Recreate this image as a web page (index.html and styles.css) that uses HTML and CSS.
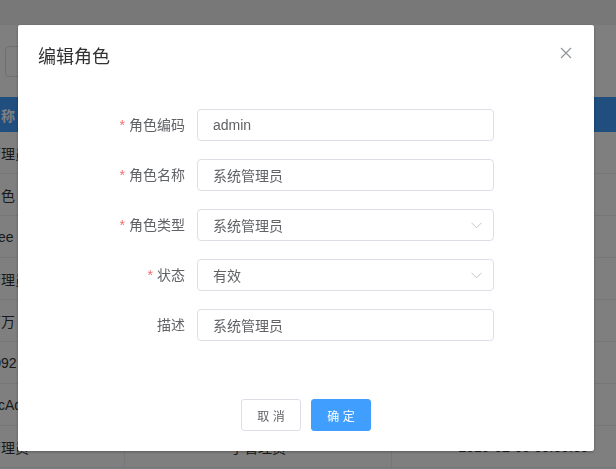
FILE: index.html
```html
<!DOCTYPE html>
<html lang="zh-CN">

<head>
    <meta charset="UTF-8">
    <meta name="viewport" content="width=device-width, initial-scale=1.0">
    <title>角色管理</title>
    <link rel="stylesheet" href="styles.css">
</head>

<body>
    <div class="page">
        <div class="topbar"></div>
        <div class="toolbar">
            <div class="search"></div>
        </div>
        <table class="grid">
            <tr>
                <th class="c1">角色名称</th>
                <th class="c2">角色类型</th>
                <th class="c3">创建时间</th>
            </tr>
            <tr><td class="c1">系统管理员</td><td class="c2">系统管理员</td><td class="c3">2019-02-05 09:09:09</td></tr>
            <tr><td class="c1">测试角色</td><td class="c2">普通角色</td><td class="c3">2019-02-05 09:09:09</td></tr>
            <tr><td class="c1">attendee</td><td class="c2">普通角色</td><td class="c3">2019-02-05 09:09:09</td></tr>
            <tr><td class="c1">部门管理员</td><td class="c2">子管理员</td><td class="c3">2019-02-05 09:09:09</td></tr>
            <tr><td class="c1">销售百万</td><td class="c2">普通角色</td><td class="c3">2019-02-05 09:09:09</td></tr>
            <tr><td class="c1">guest092</td><td class="c2">普通角色</td><td class="c3">2019-02-05 09:09:09</td></tr>
            <tr><td class="c1">graphicAdmin</td><td class="c2">子管理员</td><td class="c3">2019-02-05 09:09:09</td></tr>
            <tr><td class="c1">系统管理员</td><td class="c2">子管理员</td><td class="c3">2019-02-05 09:09:09</td></tr>
        </table>
    </div>

    <div class="mask"></div>

    <div class="dialog-wrap">
        <div class="dialog">
            <div class="dialog-header">
                <span class="dialog-title">编辑角色</span>
                <button class="close" type="button">
                    <svg width="16" height="16" viewBox="0 0 16 16">
                        <path d="M3 3L13 13M13 3L3 13" stroke="#909399" stroke-width="1.2" fill="none" />
                    </svg>
                </button>
            </div>
            <div class="dialog-body">
                <div class="form-item">
                    <label class="label required">角色编码</label>
                    <div class="field">admin</div>
                </div>
                <div class="form-item">
                    <label class="label required">角色名称</label>
                    <div class="field">系统管理员</div>
                </div>
                <div class="form-item">
                    <label class="label required">角色类型</label>
                    <div class="field select">系统管理员
                        <svg class="arrow" width="11" height="7" viewBox="0 0 11 7">
                            <path d="M0.5 0.8L5.5 5.8L10.5 0.8" stroke="#c0c4cc" stroke-width="1" fill="none" />
                        </svg>
                    </div>
                </div>
                <div class="form-item">
                    <label class="label required">状态</label>
                    <div class="field select">有效
                        <svg class="arrow" width="11" height="7" viewBox="0 0 11 7">
                            <path d="M0.5 0.8L5.5 5.8L10.5 0.8" stroke="#c0c4cc" stroke-width="1" fill="none" />
                        </svg>
                    </div>
                </div>
                <div class="form-item">
                    <label class="label">描述</label>
                    <div class="field">系统管理员</div>
                </div>
            </div>
            <div class="dialog-footer">
                <button class="btn" type="button">取 消</button>
                <button class="btn primary" type="button">确 定</button>
            </div>
        </div>
    </div>
</body>

</html>
```

FILE: styles.css
```css
body {
    margin: 0;
    background-color: #fff;
    font-family: "Liberation Sans", "Noto Sans CJK SC", sans-serif;
    overflow: hidden;
}

.topbar {
    height: 25px;
    background-color: #f1f1f1;
}

.toolbar {
    height: 72px;
    box-sizing: border-box;
    padding: 21px 0 0 5px;
}

.search {
    width: 220px;
    height: 31px;
    box-sizing: border-box;
    border: 1px solid #dcdfe6;
    border-radius: 4px;
}

.grid {
    border-collapse: collapse;
    margin-left: -51px;
    width: 707px;
    font-size: 14px;
    color: #333;
}

.grid th {
    height: 35px;
    padding: 0 10px;
    background-color: #409eff;
    color: #fff;
    font-weight: bold;
}

.grid td {
    height: 41px;
    padding: 0 10px;
    border-bottom: 1px solid #ebeef5;
    border-right: 1px solid #ebeef5;
}

.c1 {
    width: 155px;
    text-align: left;
}

.c2 {
    width: 246px;
    text-align: center;
}

.c3 {
    text-align: center;
}

.mask {
    position: fixed;
    top: 0;
    left: 0;
    right: 0;
    bottom: 0;
    background-color: rgba(0, 0, 0, .5);
}

.dialog-wrap {
    position: fixed;
    top: 0;
    left: 0;
    right: 0;
    bottom: 0;
    overflow: hidden;
}

.dialog {
    margin: 25px 0 0 18px;
    width: 576px;
    background-color: #fff;
    border-radius: 2px;
    box-shadow: 0 1px 3px rgba(0, 0, 0, .3);
}

.dialog-header {
    padding: 20px 20px 10px;
    display: flex;
    justify-content: space-between;
    align-items: flex-start;
}

.dialog-title {
    font-size: 18px;
    line-height: 24px;
    color: #303133;
}

.close {
    width: 16px;
    height: 16px;
    padding: 0;
    border: none;
    background: none;
    cursor: pointer;
}

.close svg {
    display: block;
}

.dialog-body {
    padding: 30px 20px;
}

.form-item {
    display: flex;
    align-items: center;
    margin-bottom: 18px;
}

.label {
    width: 159px;
    box-sizing: border-box;
    padding-right: 12px;
    text-align: right;
    font-size: 14px;
    line-height: 32px;
    color: #606266;
}

.required::before {
    content: "*";
    color: #f56c6c;
    margin-right: 4px;
}

.field {
    width: 297px;
    height: 32px;
    box-sizing: border-box;
    padding: 0 15px;
    border: 1px solid #dcdfe6;
    border-radius: 4px;
    display: flex;
    align-items: center;
    justify-content: space-between;
    font-size: 14px;
    color: #606266;
}

.select {
    padding-right: 11px;
}

.arrow {
    display: block;
}

.dialog-footer {
    padding: 10px 20px 20px;
    display: flex;
    justify-content: center;
    gap: 10px;
}

.btn {
    width: 60px;
    height: 32px;
    padding: 0;
    border: 1px solid #dcdfe6;
    border-radius: 3px;
    background-color: #fff;
    color: #606266;
    font-family: "Liberation Sans", "Noto Sans CJK SC", sans-serif;
    font-size: 12px;
    cursor: pointer;
}

.primary {
    background-color: #409eff;
    border-color: #409eff;
    color: #fff;
}
```
